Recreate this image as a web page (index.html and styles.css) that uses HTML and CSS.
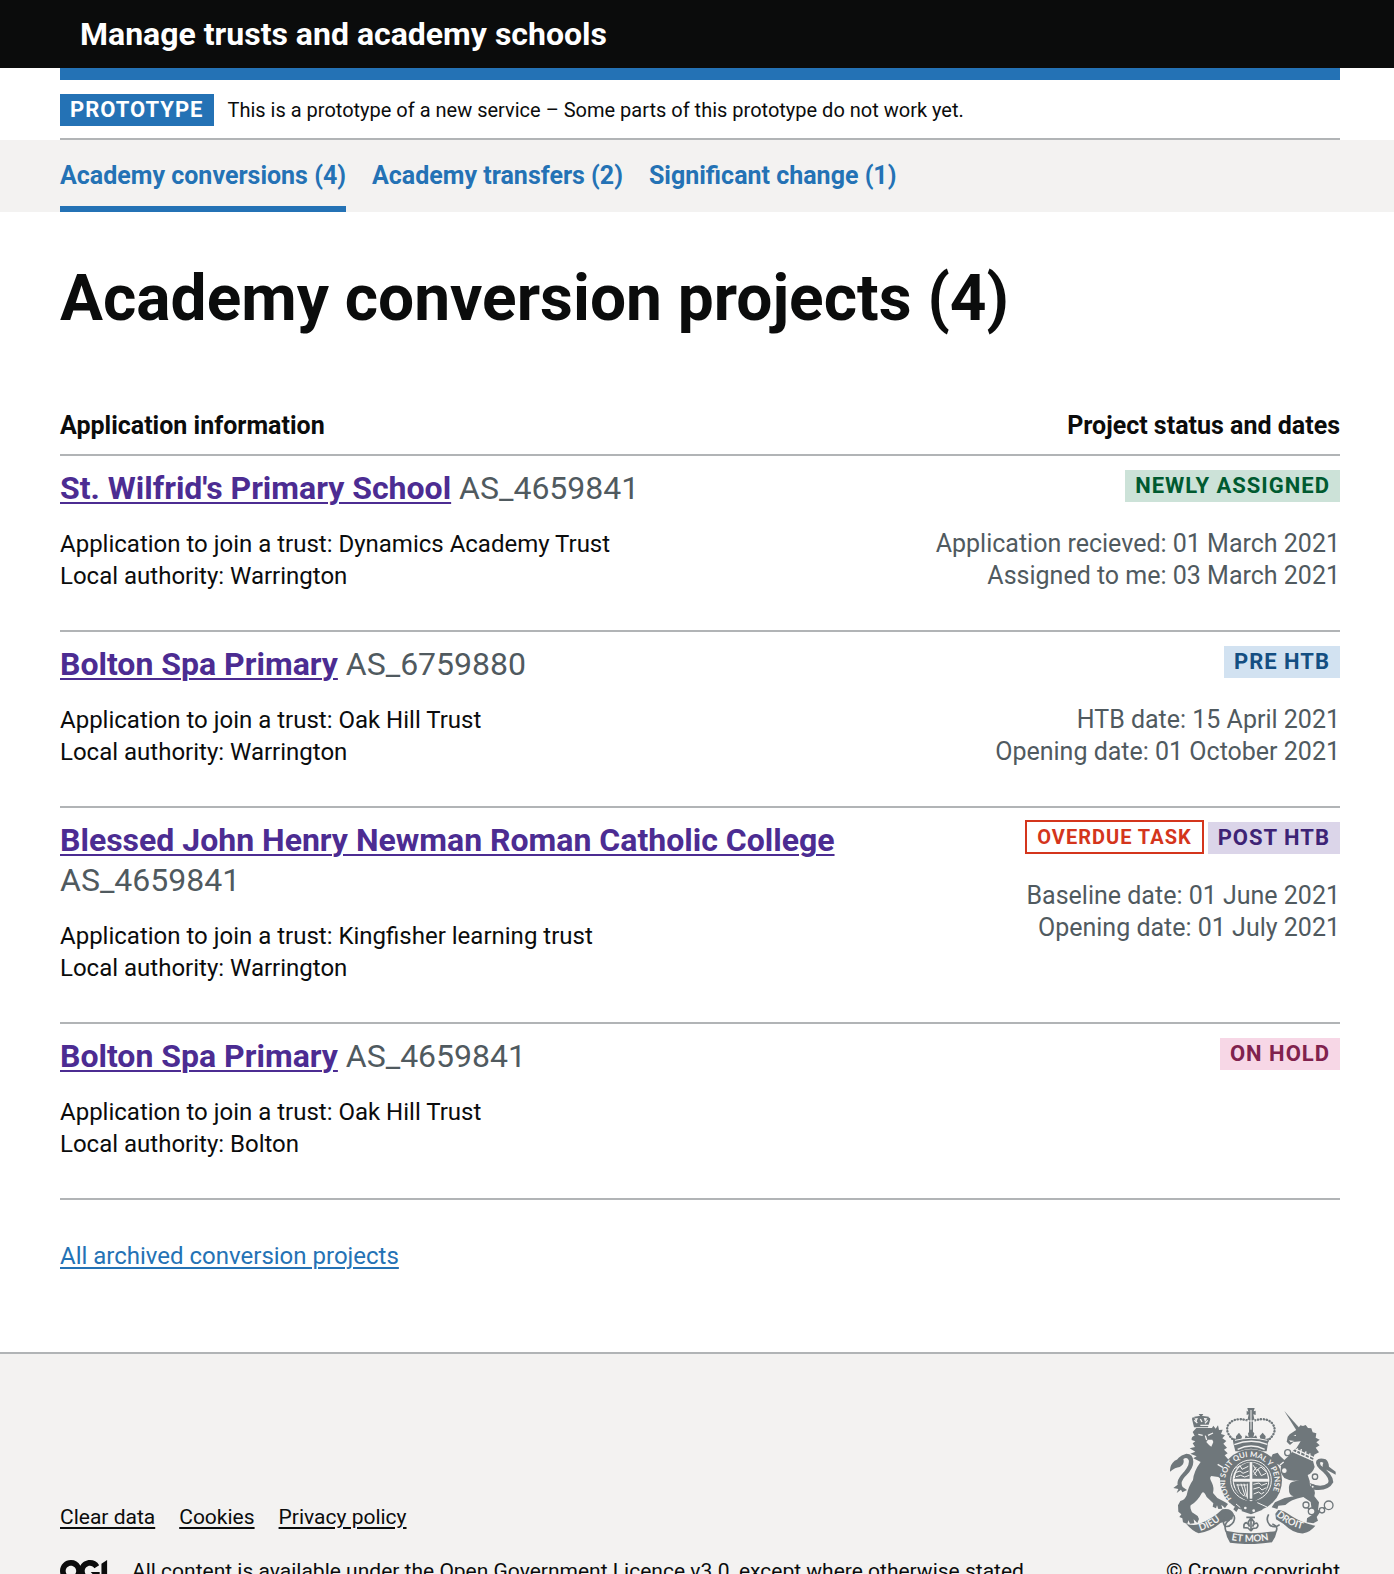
FILE: index.html
```html
<!DOCTYPE html>
<html lang="en">
<head>
<meta charset="utf-8">
<meta name="viewport" content="width=device-width, initial-scale=1">
<title>Manage trusts and academy schools</title>
<link rel="stylesheet" href="styles.css">
</head>
<body>
<header class="header">
  <div class="container header-inner">
    <a class="header-link" href="#">Manage trusts and academy schools</a>
  </div>
</header>

<div class="container">
  <div class="phase-banner">
    <strong class="tag tag-phase">Prototype</strong>
    <span class="phase-text">This is a prototype of a new service – Some parts of this prototype do not work yet.</span>
  </div>
</div>

<nav class="subnav" aria-label="Projects">
  <ul class="container subnav-list">
    <li><a class="subnav-link is-current" href="#" aria-current="page">Academy conversions (4)</a></li>
    <li><a class="subnav-link" href="#">Academy transfers (2)</a></li>
    <li><a class="subnav-link" href="#">Significant change (1)</a></li>
  </ul>
</nav>

<main class="container main">
  <h1 class="page-title">Academy conversion projects (4)</h1>

  <table class="projects">
    <thead>
      <tr>
        <th scope="col">Application information</th>
        <th scope="col" class="status">Project status and dates</th>
      </tr>
    </thead>
    <tbody>
      <tr>
        <td>
          <div class="project-name"><a href="#">St. Wilfrid's Primary School</a> <span class="reference">AS_4659841</span></div>
          <p class="details">Application to join a trust: Dynamics Academy Trust<br>Local authority: Warrington</p>
        </td>
        <td class="status">
          <div class="tags"><strong class="tag tag-green">Newly assigned</strong></div>
          <p class="dates">Application recieved: 01 March 2021<br>Assigned to me: 03 March 2021</p>
        </td>
      </tr>
      <tr>
        <td>
          <div class="project-name"><a href="#">Bolton Spa Primary</a> <span class="reference">AS_6759880</span></div>
          <p class="details">Application to join a trust: Oak Hill Trust<br>Local authority: Warrington</p>
        </td>
        <td class="status">
          <div class="tags"><strong class="tag tag-blue">Pre HTB</strong></div>
          <p class="dates">HTB date: 15 April 2021<br>Opening date: 01 October 2021</p>
        </td>
      </tr>
      <tr>
        <td>
          <div class="project-name"><a href="#">Blessed John Henry Newman Roman Catholic College</a> <span class="reference">AS_4659841</span></div>
          <p class="details">Application to join a trust: Kingfisher learning trust<br>Local authority: Warrington</p>
        </td>
        <td class="status">
          <div class="tags"><strong class="tag tag-overdue">Overdue task</strong><strong class="tag tag-purple">Post HTB</strong></div>
          <p class="dates">Baseline date: 01 June 2021<br>Opening date: 01 July 2021</p>
        </td>
      </tr>
      <tr>
        <td>
          <div class="project-name"><a href="#">Bolton Spa Primary</a> <span class="reference">AS_4659841</span></div>
          <p class="details">Application to join a trust: Oak Hill Trust<br>Local authority: Bolton</p>
        </td>
        <td class="status">
          <div class="tags"><strong class="tag tag-pink">On hold</strong></div>
        </td>
      </tr>
    </tbody>
  </table>

  <p class="archive"><a href="#">All archived conversion projects</a></p>
</main>

<footer class="footer">
  <div class="container footer-inner">
    <div class="footer-meta">
      <ul class="footer-links">
        <li><a href="#">Clear data</a></li>
        <li><a href="#">Cookies</a></li>
        <li><a href="#">Privacy policy</a></li>
      </ul>
      <div class="licence">
        <svg class="ogl" viewBox="0 0 483 195" aria-hidden="true"><path fill="currentColor" d="M421.500 142.800V.1l-50.700 32.300v161.100h112.400v-50.700zm-122.300-9.600A47.120 47.120 0 0 1 221 97.800c0-26 21.100-47.100 47.100-47.100 16.700 0 31.400 8.700 39.700 21.800l42.700-27.200A97.630 97.630 0 0 0 268.100 0c-36.500 0-68.300 20.100-85.100 49.700A98 98 0 0 0 97.800 0C43.900 0 0 43.900 0 97.800s43.900 97.800 97.800 97.800c36.500 0 68.300-20.100 85.100-49.700a97.760 97.760 0 0 0 149.600 25.400l19.400 22.200h3v-87.800h-80l24.300 27.500zM97.800 145c-26 0-47.100-21.100-47.100-47.100s21.100-47.100 47.100-47.100 47.100 21.100 47.100 47.100S123.800 145 97.800 145"/></svg>
        <span>All content is available under the <a href="#">Open Government Licence v3.0</a>, except where otherwise stated</span>
      </div>
    </div>
    <a class="crown" href="#">
      <svg class="arms" viewBox="60 54 498 408" aria-hidden="true">
        <defs>
          <path id="garter" d="M247 327A74 74 0 1 1 359 319"/>
          <path id="motto-left" d="M151 423Q190 412 222 381"/>
          <path id="motto-mid" d="M244 450Q303 462 364 448"/>
          <path id="motto-right" d="M378 376Q410 407 464 419"/>
        </defs>
        <!-- lion -->
        <g class="fill">
          <path d="M132 112L126 87Q126 80 133 83L139 97L145 80L150 77L146 72H160L156 78L161 82L165 96L173 83Q182 82 181 88L174 112Z"/>
          <path d="M139 114H186L190 107L197 116L204 106L207 120L218 119L213 132L225 136L217 145L229 153L220 161L231 173L222 179L233 190L224 196L237 211Q225 222 218 244L229 254Q240 262 238 283L225 292Q219 269 205 261L184 258Q176 262 186 279Q193 293 189 309L202 324L226 337L234 342L225 354L214 344L217 356L205 357L201 346L198 355L188 350L190 340L170 321Q162 302 156 308Q143 333 122 346Q119 353 126 367L143 378L147 387L142 399L131 388L133 400L120 401L115 391L112 402L99 397L97 385L88 381L94 373L85 365L84 346L91 333Q104 331 110 316Q115 289 129 270Q131 244 152 216L130 205L140 199L121 191L136 185L119 175L135 171L128 160L136 154L125 150Q123 139 134 137L128 126Z"/>
          <path d="M86 203Q93 195 109 191Q130 191 130 215Q130 234 110 255Q88 275 98 291L111 300L97 307L93 299L80 309L85 297L70 294L83 284Q80 273 93 256Q121 226 116 210Q111 199 100 207Q105 222 89 231Q76 232 60 245Q59 224 74 212Q83 209 86 203Z"/>
          <path d="M109 402Q130 408 146 403Q190 385 217 358Q243 353 251 371L247 388Q229 394 211 399Q184 424 146 430Q127 423 109 402Z"/>
        </g>
        <path class="cut-line" d="M145 133L158 136M174 136L189 129M166 137L170 150M133 91L142 99M151 87L156 96M173 91L165 100M151 106H178M203 223L235 242"/>
        <path class="bg" d="M174 149H187L190 156L184 170L177 165L169 156Z"/>
        <path class="line" d="M133 83L153 80L176 83M225 383Q215 397 226 409Q239 412 250 397Q258 380 248 373M356 373Q346 391 359 405Q374 416 389 404"/>
        <!-- unicorn -->
        <g class="fill">
          <path d="M403 63L449 115L440 122Z"/>
          <path d="M419 133L443 117L451 106L459 108L467 105L474 114L484 115L488 127L499 130L497 143L509 149L499 157L509 166L497 173L507 187L493 194L489 211L468 207L427 184L439 175L452 154L430 156L420 165L410 155L413 140Z"/>
          <path d="M428 184L489 213L494 231Q487 251 473 255Q481 273 480 287Q500 297 493 319L507 337L504 360L511 365L500 381L504 392L490 400L470 397L471 385L487 374L482 336L460 321Q421 329 406 345L385 347L382 357L365 352L375 337L404 324L431 319Q416 314 417 299Q415 281 426 276L449 270Q424 276 403 264Q389 248 393 228L375 218L364 202L368 193L383 188L390 198L403 210L419 195Z"/>
          <path d="M384 244L388 270L381 264L373 272L375 255L368 251Z"/>
          <path d="M479 279Q515 295 534 279Q541 267 519 246Q493 225 499 212Q507 201 527 208Q536 215 537 230L557 245V254Q539 244 529 239Q512 236 520 218Q506 212 512 226Q551 255 550 277Q535 305 492 299Z"/>
          <path d="M385 360Q399 359 424 378Q458 400 496 407Q482 425 461 430Q431 432 401 402L378 388L376 371Z"/>
        </g>
        <path class="bg" d="M430 137L438 134V138ZM417 151L434 153L422 157Z"/>
        <path class="cut-line" d="M427 184L488 211M436 177L492 203M443 175L439 189M454 177L451 195M468 184L464 201M480 190L477 208M390 225L401 216"/>
        <g class="ring"><circle cx="413" cy="188" r="9"/><circle cx="403" cy="242" r="9"/><circle cx="495" cy="260" r="8"/><circle cx="488" cy="290" r="5"/><circle cx="468" cy="345" r="9"/><circle cx="485" cy="364" r="10"/><circle cx="516" cy="361" r="8"/><circle cx="536" cy="346" r="13"/><path d="M472 354L480 357M495 364L508 363M520 355L526 352"/></g>
        <!-- garter and shield -->
        <circle class="fill" cx="303" cy="271" r="93"/>
        <circle class="cut-thin" cx="303" cy="271" r="61"/>
        <circle class="bg" cx="303" cy="271" r="55"/>
        <g class="fill">
          <path d="M255 264Q258 225 299 217V266H251Z"/><path d="M307 217Q349 226 354 266H307Z"/><path d="M251 275H299V337Q259 321 251 275Z"/><path d="M307 275H355Q349 320 307 337Z"/>
        </g>
        <path class="cut-thin" d="M257 235L270 227L276 238L295 229M256 248L270 243L279 250L296 243M258 260L272 256L284 261L298 256M310 226L319 241L333 231L348 245M312 254L324 238L334 257L348 250M319 231L310 244L320 258M310 283L327 279L335 286L351 280M310 297L328 292L336 300L349 293M311 312L326 306L334 312L342 307M263 282Q265 308 282 318M273 281L286 320M282 281L291 321M292 281V326M259 285H290"/>
        <text class="motto motto-ring"><textPath href="#garter" startOffset="2">HONI SOIT QUI MAL Y PENSE</textPath></text>
        <path class="fill" d="M274 341L259 366L250 358L260 342ZM287 345H327L338 359L303 373L274 363Z"/>
        <circle class="bg" cx="286" cy="354" r="4"/><circle class="bg" cx="311" cy="362" r="4"/>
        <path class="cut-thin" d="M258 342L271 353M322 338L351 351"/>
        <!-- crown -->
        <path class="fill" d="M292 54H314L311 64L317 62V75L310 73L313 88L309 91V128H297V91L293 88L296 73L290 75V62L295 65Z"/>
        <path class="beads" d="M254 153Q224 128 234 106Q250 80 292 91M352 153Q383 128 370 105Q355 80 315 91"/>
        <path class="fill" d="M250 160L248 145L258 146L258 139L267 128L276 140L274 148L284 146L287 136L296 142L294 130L303 119L313 130L310 142L318 136L323 147L331 146L329 138L338 128L347 139L346 147L357 145L354 160L350 184H338Q303 169 268 184H256Z"/>
        <path class="cut-line" d="M253 164Q303 144 352 163M263 178Q303 158 344 178"/>
        <path class="cut-thin" d="M303 60V119M290 93H315M255 151Q303 139 352 151"/>
        <!-- centre scroll and rose -->
        <path class="fill" d="M226 422Q303 437 381 422Q378 439 366 457Q303 467 240 458Q229 441 226 422Z"/>
        <path class="line" d="M228 424Q219 401 239 389M378 424Q386 410 367 402M289 382H315M303 382V424M303 423L294 414L282 413Q280 400 289 398Q296 401 298 410L295 396L303 384L312 396L308 410Q310 400 320 399Q328 407 319 414L309 415L303 423"/>
        <text class="motto"><textPath href="#motto-left">DIEU</textPath></text>
        <text class="motto"><textPath href="#motto-mid">ET MON</textPath></text>
        <text class="motto"><textPath href="#motto-right">DROIT</textPath></text>
      </svg>
      <span>© Crown copyright</span>
    </a>
  </div>
</footer>
</body>
</html>
```
FILE: styles.css
```css
* { box-sizing: border-box; }

body {
  margin: 0;
  background: #f3f2f1;
  color: #0b0c0c;
  font-family: Roboto, "Liberation Sans", sans-serif;
  font-size: 24px;
  line-height: 32px;
}

.container { padding: 0 54px 0 60px; }

.header { background: #0b0c0c; }
.header-inner { height: 68px; padding-left: 80px; display: flex; align-items: center; }
.header-link { color: #fff; font-size: 32px; line-height: 40px; font-weight: 700; text-decoration: none; }

body > .container { background: #fff; }
.phase-banner {
  display: flex;
  align-items: center;
  gap: 14px;
  padding: 14px 0 12px;
  border-top: 12px solid #2472b5;
  border-bottom: 2px solid #b1b4b6;
}
.phase-text { font-size: 20px; }

.tag {
  display: inline-block;
  padding: 0 10px;
  font-size: 22px;
  line-height: 32px;
  font-weight: 700;
  letter-spacing: 1px;
  text-transform: uppercase;
  white-space: nowrap;
}
.tag-phase { background: #2472b5; color: #fff; }
.tag-green { background: #cce2d8; color: #005a30; }
.tag-blue { background: #d2e2f1; color: #144e81; }
.tag-purple { background: #dbd5e9; color: #3d2375; }
.tag-pink { background: #f7d7e6; color: #80224d; }
.tag-overdue { border: 2px solid #d4351c; color: #d4351c; font-size: 20px; line-height: 30px; }

.subnav-list { display: flex; gap: 26px; margin: 0; list-style: none; }
.subnav-link {
  display: block;
  padding: 20px 0 14px;
  border-bottom: 6px solid transparent;
  color: #2472b5;
  font-size: 25px;
  font-weight: 700;
  text-decoration: none;
}
.subnav-link.is-current { border-color: #2472b5; }

.main { padding-top: 52px; padding-bottom: 80px; }
.page-title { margin: 0 0 76px; font-size: 64px; line-height: 70px; font-weight: 700; }

.projects { width: 100%; border-collapse: separate; border-spacing: 0; }
.projects th { padding: 0 0 12px; text-align: left; font-size: 25px; font-weight: 700; }
.projects td { padding: 12px 0 38px; vertical-align: top; }
.projects th, .projects td { border-bottom: 2px solid #b1b4b6; }
.projects .status { width: 37%; padding-left: 10px; text-align: right; }

.project-name { font-size: 32px; line-height: 40px; }
.project-name a { color: #4c2c92; font-weight: 700; text-decoration-thickness: 2px; text-underline-offset: 3px; }
.reference { color: #505a5f; }
.details, .dates { margin: 20px 0 0; }
.dates { color: #505a5f; font-size: 25px; }
.tags { display: flex; justify-content: flex-end; align-items: flex-end; gap: 4px; height: 34px; }
.status .dates { margin-top: 26px; }

.archive { margin: 40px 0 0; }
.archive a { color: #2472b5; text-decoration-thickness: 2px; text-underline-offset: 3px; }

.footer { border-top: 2px solid #b1b4b6; background: #f3f2f1; font-size: 21px; }
.footer a { color: #0b0c0c; text-decoration-thickness: 2px; text-underline-offset: 3px; }
.footer .licence a { text-underline-offset: 4px; }
.footer-inner { display: flex; justify-content: space-between; align-items: flex-end; padding-top: 54px; }
.footer-links { display: flex; gap: 24px; margin: 0 0 22px; padding: 0; list-style: none; }
.licence { display: flex; gap: 18px; align-items: center; }
.ogl { width: 54px; height: 22px; flex: none; }
.footer .crown { display: flex; flex-direction: column; align-items: center; gap: 11px; text-decoration: none; }
.arms { width: 166px; height: 136px; }

.fill { fill: #6f777b; }
.bg { fill: #f3f2f1; }
.line { fill: none; stroke: #6f777b; stroke-width: 5; }
.beads { fill: none; stroke: #6f777b; stroke-width: 7; stroke-linecap: round; stroke-dasharray: 1 8; }
.cut-line { fill: none; stroke: #f3f2f1; stroke-width: 4; }
.cut-thin { fill: none; stroke: #f3f2f1; stroke-width: 3; }
.ring { fill: #f3f2f1; stroke: #6f777b; stroke-width: 4; }
.motto { fill: #f3f2f1; font-family: Lato, sans-serif; font-size: 29px; font-weight: 700; }
.motto-ring { font-size: 23px; }
```
